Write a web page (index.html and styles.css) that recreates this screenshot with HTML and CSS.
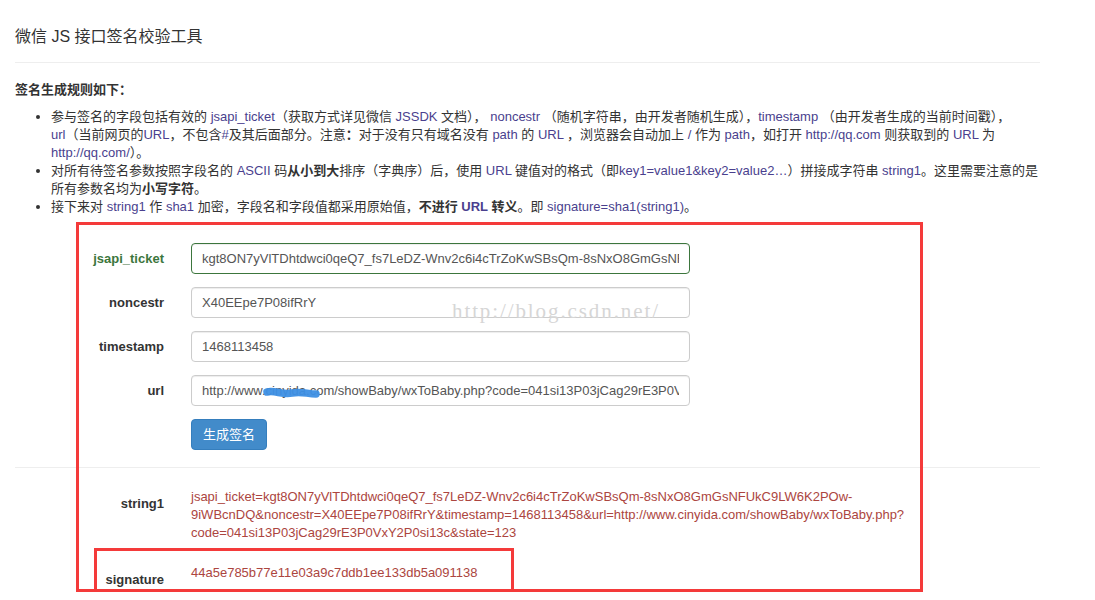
FILE: index.html
```html
<!DOCTYPE html>
<html lang="zh-CN">
<head>
<meta charset="utf-8">
<title>微信 JS 接口签名校验工具</title>
<link rel="stylesheet" href="styles.css">
</head>
<body>
<div class="page">
  <h3 class="title">微信 JS 接口签名校验工具</h3>
  <div class="rule"></div>

  <div class="rules-head">签名生成规则如下：</div>
  <ul class="rules">
    <li>参与签名的字段包括有效的 <span class="c">jsapi_ticket</span>（获取方式详见微信 <span class="c">JSSDK</span> 文档）， <span class="c">noncestr</span> （随机字符串，由开发者随机生成），<span class="c">timestamp</span> （由开发者生成的当前时间戳），<br><span class="c">url</span>（当前网页的<span class="c">URL</span>，不包含<span class="c">#</span>及其后面部分。注意<b>：</b>对于没有只有域名没有 <span class="c">path</span> 的 <span class="c">URL</span> ，浏览器会自动加上 <span class="c">/</span> 作为 <span class="c">path</span>，如打开 <span class="c">http://qq.com</span> 则获取到的 <span class="c">URL</span> 为<br><span class="c">http://qq.com/</span>）。</li>
    <li>对所有待签名参数按照字段名的 <span class="c">ASCII</span> 码<b>从小到大</b>排序（字典序）后，使用 <span class="c">URL</span> 键值对的格式（即<span class="c">key1=value1&amp;key2=value2…</span>）拼接成字符串 <span class="c">string1</span>。这里需要注意的是<br>所有参数名均为<b>小写字符</b>。</li>
    <li>接下来对 <span class="c">string1</span> 作 <span class="c">sha1</span> 加密，字段名和字段值都采用原始值，<b>不进行 <span class="c">URL</span> 转义</b>。即 <span class="c">signature=sha1(string1)</span>。</li>
  </ul>

  <form class="form">
    <div class="row ok">
      <label class="lbl">jsapi_ticket</label>
      <input class="field" type="text" value="kgt8ON7yVlTDhtdwci0qeQ7_fs7LeDZ-Wnv2c6i4cTrZoKwSBsQm-8sNxO8GmGsNFUkC9LW6K2POw-9iWBcnDQ">
    </div>
    <div class="row">
      <label class="lbl">noncestr</label>
      <input class="field" type="text" value="X40EEpe7P08ifRrY">
    </div>
    <div class="row">
      <label class="lbl">timestamp</label>
      <input class="field" type="text" value="1468113458">
    </div>
    <div class="row">
      <label class="lbl">url</label>
      <input class="field" type="text" value="http://www.cinyida.com/showBaby/wxToBaby.php?code=041si13P03jCag29rE3P0VxY2P0si13c&amp;state=123">
    </div>
    <div class="btn-row">
      <button type="button" class="btn">生成签名</button>
    </div>
  </form>

  <div class="rule rule-2"></div>

  <div class="out-row">
    <div class="lbl">string1</div>
    <div class="out">jsapi_ticket=kgt8ON7yVlTDhtdwci0qeQ7_fs7LeDZ-Wnv2c6i4cTrZoKwSBsQm-8sNxO8GmGsNFUkC9LW6K2POw-<br>9iWBcnDQ&amp;noncestr=X40EEpe7P08ifRrY&amp;timestamp=1468113458&amp;url=http://www.cinyida.com/showBaby/wxToBaby.php?<br>code=041si13P03jCag29rE3P0VxY2P0si13c&amp;state=123</div>
  </div>
  <div class="out-row sig">
    <div class="lbl">signature</div>
    <div class="out">44a5e785b77e11e03a9c7ddb1ee133db5a091138</div>
  </div>
</div>

<div class="watermark">http://blog.csdn.net/</div>
<svg class="scribble" width="70" height="24" viewBox="0 0 70 24" aria-hidden="true">
  <path d="M7 11 C 15 9, 22 14, 32 12 S 47 13, 56 13" fill="none" stroke="#3d8fe4" stroke-width="7.5" stroke-linecap="round" opacity="0.95"/>
</svg>
<div class="mark mark-big"></div>
<div class="mark mark-small"></div>
</body>
</html>
```

FILE: styles.css
```css
body {
  margin: 0;
  background: #fff;
  color: #333;
  font-family: "Liberation Sans", "Noto Sans CJK SC", sans-serif;
  font-size: 12px;
}

.page {
  width: 1025px;
  padding-left: 15px;
}

.title {
  margin: 0;
  padding-top: 25px;
  font-size: 16px;
  line-height: 24px;
  font-weight: normal;
  color: #333;
}

.rule {
  height: 1px;
  background: #eee;
  margin-top: 13px;
}

.rules-head {
  margin-top: 18px;
  font-size: 13px;
  line-height: 18px;
  font-weight: bold;
}

.rules {
  margin: 9px 0 0;
  padding-left: 36px;
}

.rules li {
  font-size: 13px;
  line-height: 18px;
  white-space: nowrap;
}

.rules b {
  font-weight: bold;
}

.c {
  color: #4a3f8e;
}

.form {
  margin-top: 27px;
}

.row {
  display: flex;
  gap: 27px;
  margin-bottom: 13px;
}

.lbl {
  width: 149px;
  flex: none;
  text-align: right;
  padding-top: 7px;
  font-size: 13px;
  line-height: 18px;
  font-weight: bold;
  color: #333;
}

.field {
  width: 499px;
  height: 31px;
  box-sizing: border-box;
  margin: 0;
  padding: 0 10px;
  border: 1px solid #ccc;
  border-radius: 4px;
  font-family: "Liberation Sans", "Noto Sans CJK SC", sans-serif;
  font-size: 13px;
  color: #555;
  background: #fff;
  box-shadow: inset 0 1px 1px rgba(0, 0, 0, 0.075);
}

.ok .lbl {
  color: #3c763d;
}

.ok .field {
  border-color: #3c763d;
}

.btn-row {
  padding-left: 176px;
}

.btn {
  height: 31px;
  margin: 0;
  padding: 0 11px;
  border: 1px solid #357ebd;
  border-radius: 4px;
  background: #428bca;
  color: #fff;
  font-family: "Liberation Sans", "Noto Sans CJK SC", sans-serif;
  font-size: 13px;
  line-height: 17px;
}

.rule-2 {
  margin-top: 17px;
}

.out-row {
  display: flex;
  gap: 27px;
  margin-top: 20px;
}

.out-row.sig {
  margin-top: 22px;
}

.out {
  font-size: 13px;
  line-height: 18px;
  color: #ac4540;
  white-space: nowrap;
}

.watermark {
  position: absolute;
  left: 452px;
  top: 298px;
  font-family: "Liberation Serif", serif;
  font-size: 21px;
  line-height: 26px;
  letter-spacing: 1.9px;
  color: #d6d6d6;
}

.scribble {
  position: absolute;
  left: 260px;
  top: 381px;
}

.mark {
  position: absolute;
  border: 3px solid #f43a3a;
  box-sizing: border-box;
}

.mark-big {
  left: 76px;
  top: 222px;
  width: 847px;
  height: 370px;
}

.mark-small {
  left: 94px;
  top: 548px;
  width: 420px;
  height: 44px;
}
```
